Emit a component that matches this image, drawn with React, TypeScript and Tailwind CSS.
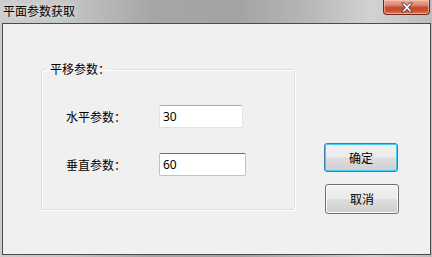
import * as React from "react"

const cjk = "font-['Noto_Sans_CJK_SC','Noto_Sans',sans-serif]"

function CloseButton() {
    return (
        <div className="mr-[2px] flex h-[15px] w-[47px] items-center justify-center rounded-b-[4px] border border-t-0 border-[#6b2a1e] bg-[linear-gradient(180deg,#e9ad9c_0%,#dc8a74_35%,#c8472d_55%,#c9502f_75%,#e07a58_100%)] shadow-[inset_0_0_0_1px_rgba(255,210,190,0.55)]">
            <svg width="14" height="11" viewBox="0 0 14 11">
                <path
                    d="M1.5 1 H4.5 L7 3.8 L9.5 1 H12.5 L8.6 5.5 L12.5 10 H9.5 L7 7.2 L4.5 10 H1.5 L5.4 5.5 Z"
                    fill="#ffffff"
                    stroke="#4b4b55"
                    strokeWidth="1"
                    strokeLinejoin="round"
                />
            </svg>
        </div>
    )
}

function Field({ label, value, focused, width }: { label: string; value: string; focused?: boolean; width: string }) {
    return (
        <div className="flex items-center">
            <span className="w-[93px] text-[12px] leading-[14px] text-black">{label}</span>
            <div
                className={
                    focused
                        ? `h-[23px] ${width} rounded-[2px] border border-[#a4c9e3] border-t-[#3d7bad] bg-white pl-[3px] flex items-center`
                        : `h-[23px] ${width} rounded-[2px] border border-[#e0e3ea] border-t-[#abadb3] bg-white pl-[3px] flex items-center`
                }
            >
                <span className="font-['Noto_Sans',sans-serif] text-[12px] leading-[14px] text-black">{value}</span>
            </div>
        </div>
    )
}

function DlgButton({ children, primary }: { children: React.ReactNode; primary?: boolean }) {
    return (
        <button
            className={
                primary
                    ? "flex h-[29px] w-[74px] items-center justify-center rounded-[3px] border border-[#3c7fb1] bg-[linear-gradient(180deg,#f2f2f2_0%,#ebebeb_48%,#dddddd_52%,#cfcfcf_100%)] shadow-[inset_0_0_0_1px_#48c8f5] text-[12px] leading-[14px] text-black"
                    : "ml-[1px] flex h-[30px] w-[74px] items-center justify-center rounded-[3px] border border-[#707070] bg-[linear-gradient(180deg,#f2f2f2_0%,#ebebeb_48%,#dddddd_52%,#cfcfcf_100%)] shadow-[inset_0_0_0_1px_#fbfbfb] text-[12px] leading-[14px] text-black"
            }
        >
            {children}
        </button>
    )
}

export default function App() {
    return (
        <div className={`flex h-[257px] w-[432px] flex-col overflow-hidden bg-[linear-gradient(90deg,#cdcdcd_0%,#c6c6c6_15%,#a6a6a6_35%,#a3a3a3_55%,#b8b8b8_72%,#d2d2d2_86%,#bdbdbd_100%)] ${cjk}`}>
            {/* TITLE BAR */}
            <div className="flex h-[23px] shrink-0 items-start justify-between">
                <span className="ml-[3px] mt-[4px] text-[12px] leading-[13px] text-black [text-shadow:0_0_6px_rgba(255,255,255,0.8)]">
                    平面参数获取
                </span>
                <CloseButton />
            </div>

            {/* CLIENT AREA */}
            <div className="ml-[2px] mr-[1px] flex h-[232px] shrink-0 border border-[#4b4b4b] bg-[#f0f0f0]">
                <fieldset className="ml-[38px] mt-[38px] h-[148px] w-[254px] rounded-[3px] border border-[#d5dfe5] shadow-[inset_1px_1px_0_#ffffff,1px_1px_0_#ffffff]">
                    <legend className="ml-[5px] px-[3px] text-[12px] leading-[14px] text-black">平移参数：</legend>
                    <div className="flex flex-col gap-[25px] pl-[24px] pt-[29px]">
                        <Field label="水平参数：" value="30" width="w-[84px]" />
                        <Field label="垂直参数：" value="60" width="w-[87px]" focused />
                    </div>
                </fieldset>

                <div className="ml-[29px] mt-[119px] flex flex-col gap-[12px]">
                    <DlgButton primary>确定</DlgButton>
                    <DlgButton>取消</DlgButton>
                </div>
            </div>
        </div>
    )
}
